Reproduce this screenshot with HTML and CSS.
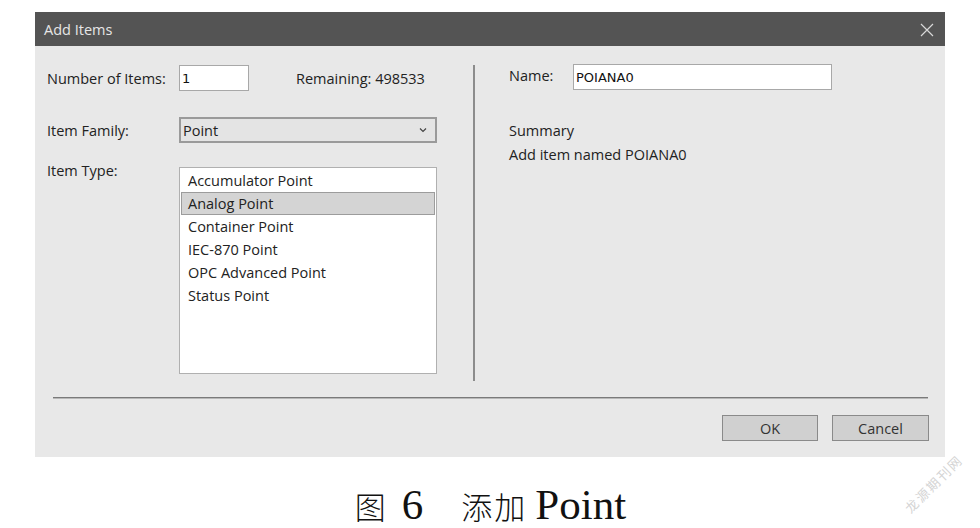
FILE: index.html
```html
<!DOCTYPE html>
<html>
<head>
<meta charset="utf-8">
<link rel="stylesheet" href="styles.css">
</head>
<body>
<div class="page">
  <div class="dialog">
    <div class="titlebar">
      <span class="title">Add Items</span>
      <svg class="close" width="14" height="14" viewBox="0 0 14 14"><path d="M1 1L13 13M13 1L1 13" stroke="#d8d8d8" stroke-width="1.2" fill="none"/></svg>
    </div>
    <div class="body">
      <div class="main">
        <div class="left">
          <div class="row r1">
            <span class="label">Number of Items:</span>
            <div class="input num">1</div>
            <span class="remaining">Remaining: 498533</span>
          </div>
          <div class="row r2">
            <span class="label">Item Family:</span>
            <div class="select"><span>Point</span>
              <svg width="8" height="6" viewBox="0 0 8 6"><path d="M1 1.5L4 4.5L7 1.5" stroke="#444" stroke-width="1.2" fill="none"/></svg>
            </div>
          </div>
          <div class="row r3">
            <span class="label lt">Item Type:</span>
            <div class="listbox">
              <div class="item">Accumulator Point</div>
              <div class="item sel">Analog Point</div>
              <div class="item">Container Point</div>
              <div class="item">IEC-870 Point</div>
              <div class="item">OPC Advanced Point</div>
              <div class="item">Status Point</div>
            </div>
          </div>
        </div>
        <div class="divider"></div>
        <div class="right">
          <div class="row r1">
            <span class="label name">Name:</span>
            <div class="input nameinput">POIANA0</div>
          </div>
          <div class="summary">
            <div>Summary</div>
            <div>Add item named POIANA0</div>
          </div>
        </div>
      </div>
      <div class="sep"></div>
      <div class="buttons">
        <div class="btn ok">OK</div>
        <div class="btn cancel">Cancel</div>
      </div>
    </div>
  </div>
  <div class="caption"><span class="cjk">图</span><span class="lat n6">6</span><span class="cjk tj">添加</span><span class="lat pt">Point</span></div>
  <div class="watermark">龙源期刊网</div>
</div>
</body>
</html>
```

FILE: styles.css
```css
html, body { margin: 0; padding: 0; background: #fff; }
.page { position: relative; width: 980px; height: 528px; overflow: hidden; font-family: "Open Sans", "Noto Sans", sans-serif; color: #222; }
.dialog { margin-left: 35px; margin-top: 12px; width: 910px; height: 445px; background: #e8e8e8; display: flex; flex-direction: column; }
.titlebar { height: 34px; background: #545454; display: flex; align-items: center; justify-content: space-between; padding: 0 11px 0 9px; }
.title { color: #e6e6e6; font-size: 14.5px; }
.close { margin-top: 1px; }
.body { flex: 1; padding: 19px 0 0 12px; display: flex; flex-direction: column; }
.main { display: flex; height: 316px; }
.left { width: 390px; display: flex; flex-direction: column; }
.row { display: flex; align-items: center; }
.label { font-size: 14.5px; width: 132px; flex-shrink: 0; }
.r1 { height: 26px; }
.r2 { height: 26px; margin-top: 26px; }
.r3 { margin-top: 24px; align-items: flex-start; }
.lt { margin-top: -6px; }
.input { background: #fff; border: 1px solid #a8a8a8; box-sizing: border-box; height: 26px; display: flex; align-items: center; font-family: "DejaVu Sans", sans-serif; font-size: 13px; color: #111; padding-left: 2px; }
.num { width: 70px; }
.remaining { font-size: 14.5px; margin-left: 47px; }
.select { width: 258px; height: 26px; box-sizing: border-box; border: 2px solid #9a9a9a; background: #e4e4e4; display: flex; align-items: center; justify-content: space-between; padding: 0 8px 0 2px; font-size: 14.5px; }
.listbox { width: 258px; height: 207px; box-sizing: border-box; background: #fff; border: 1px solid #b0b0b0; padding: 1px 1px 0 1px; }
.item { height: 23px; box-sizing: border-box; line-height: 21px; padding-left: 6px; font-size: 14.5px; border: 1px solid transparent; }
.item.sel { background: #d4d4d4; border-color: #9c9c9c; }
.divider { width: 2px; background: #8c8c8c; margin-left: 36px; }
.right { margin-left: 34px; display: flex; flex-direction: column; }
.right .r1 { margin-top: -1px; }
.name { width: 64px; margin-top: -4px; }
.nameinput { width: 259px; }
.summary { margin-top: 29px; font-size: 14.5px; line-height: 24px; }
.sep { height: 1px; background: #7a7a7a; margin: 16px 17px 0 6px; border-bottom: 1px solid #b8b8b8; }
.buttons { display: flex; justify-content: flex-end; gap: 14px; margin: 16px 16px 0 0; }
.btn { height: 26px; box-sizing: border-box; border: 1px solid #8a8a8a; background: #d0d0d0; display: flex; align-items: center; justify-content: center; font-size: 14.5px; color: #333; }
.ok { width: 96px; }
.cancel { width: 97px; }
.caption { display: flex; justify-content: center; align-items: baseline; margin-top: 27px; color: #111; height: 44px; line-height: 42px; padding-left: 1px; }
.cjk { font-family: "Noto Sans CJK SC", sans-serif; font-size: 31px; font-weight: 300; }
.lat { font-family: "Liberation Serif", serif; font-size: 43px; }
.n6 { margin-left: 16px; }
.tj { margin-left: 38px; letter-spacing: 2px; }
.pt { margin-left: 8px; }
.watermark { position: absolute; left: 896px; top: 474px; transform: rotate(-45deg); font-family: "Noto Sans CJK SC", sans-serif; font-size: 13px; font-weight: 400; color: #d4d4d4; letter-spacing: 2px; }
```
